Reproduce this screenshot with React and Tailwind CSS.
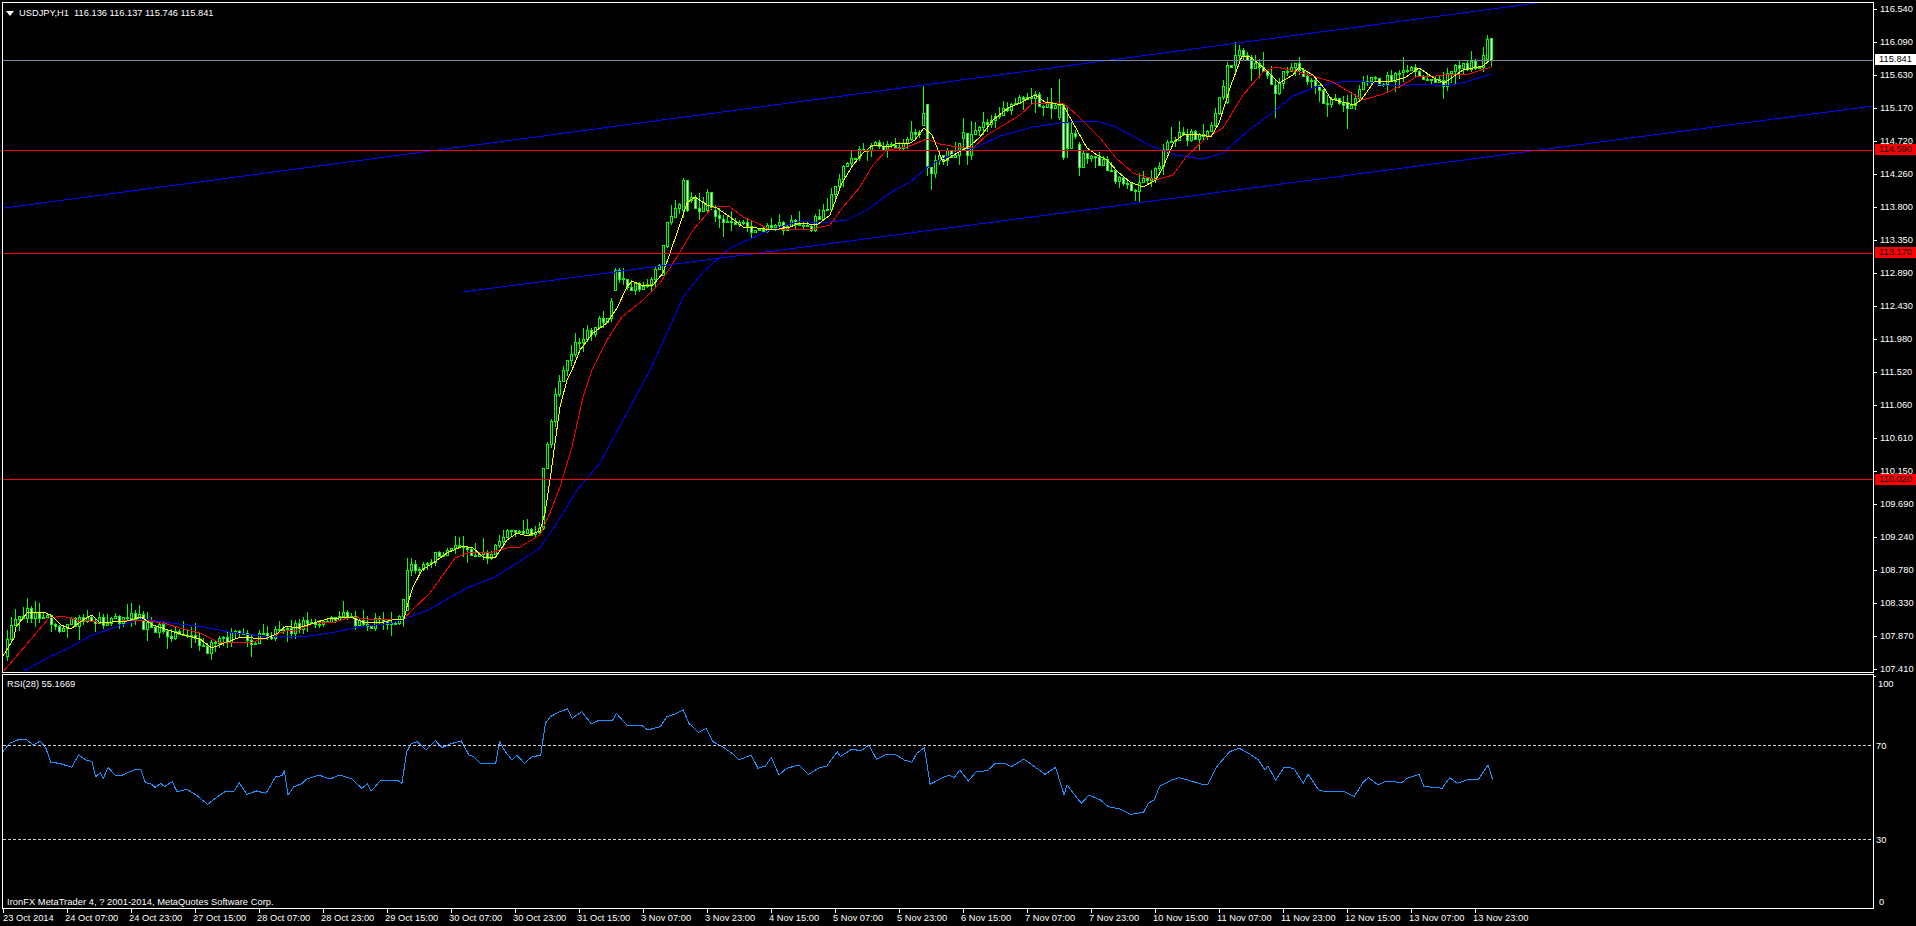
import React from "react";

const PRICE_LABELS = ["116.540","116.090","115.630","115.170","114.720","114.260","113.800","113.350","112.890","112.430","111.980","111.520","111.060","110.610","110.150","109.690","109.240","108.780","108.330","107.870","107.410"];
const TIME_LABELS = ["23 Oct 2014","24 Oct 07:00","24 Oct 23:00","27 Oct 15:00","28 Oct 07:00","28 Oct 23:00","29 Oct 15:00","30 Oct 07:00","30 Oct 23:00","31 Oct 15:00","3 Nov 07:00","3 Nov 23:00","4 Nov 15:00","5 Nov 07:00","5 Nov 23:00","6 Nov 15:00","7 Nov 07:00","7 Nov 23:00","10 Nov 15:00","11 Nov 07:00","11 Nov 23:00","12 Nov 15:00","13 Nov 07:00","13 Nov 23:00"];

// all chart points are page pixels, the svg viewBox starts at 3,3
const YELLOW = [[3,656],[14,638],[16,627],[27,613],[43,612],[51,615],[61,625],[71,629],[80,622],[92,615],[100,623],[112,622],[127,621],[141,617],[153,625],[171,631],[184,635],[200,639],[212,648],[224,643],[241,637],[265,639],[278,633],[286,626],[298,628],[314,623],[327,619],[351,617],[363,622],[380,623],[392,620],[404,619],[408,603],[413,587],[422,570],[433,563],[447,553],[463,546],[473,548],[483,557],[495,558],[507,540],[517,533],[527,536],[540,531],[545,513],[550,480],[555,443],[560,407],[567,380],[572,370],[580,350],[593,333],[607,323],[617,308],[627,287],[632,281],[643,286],[653,285],[663,273],[677,233],[687,203],[695,197],[707,205],[717,208],[730,217],[743,227],[757,228],[773,230],[790,227],[800,223],[817,225],[830,215],[842,183],[853,165],[863,153],[873,145],[890,147],[897,143],[910,143],[915,140],[924,128],[932,135],[943,162],[957,153],[970,146],[980,137],[993,120],[1008,108],[1020,103],[1035,95],[1045,102],[1063,105],[1077,130],[1087,148],[1097,155],[1107,160],[1118,172],[1130,182],[1143,187],[1156,180],[1163,167],[1174,142],[1183,135],[1196,134],[1211,137],[1219,123],[1231,85],[1242,56],[1249,56],[1264,68],[1279,83],[1293,75],[1299,67],[1313,75],[1324,88],[1331,99],[1346,103],[1354,105],[1361,100],[1374,82],[1393,81],[1406,77],[1419,68],[1434,78],[1444,83],[1463,70],[1483,66],[1491,59]];
const RED = [[3,672],[49,618],[63,616],[76,620],[90,621],[102,623],[122,621],[143,620],[167,624],[180,628],[200,633],[218,642],[253,642],[269,637],[286,631],[298,630],[314,623],[335,622],[351,617],[367,619],[404,619],[412,610],[430,593],[455,558],[470,552],[493,552],[507,548],[520,547],[540,535],[550,513],[560,487],[572,447],[583,397],[592,370],[607,340],[622,317],[643,300],[660,283],[677,257],[693,230],[712,208],[723,206],[730,207],[743,217],[757,223],[770,230],[813,229],[830,225],[843,207],[860,187],[873,165],[887,150],[907,147],[917,143],[927,139],[940,144],[957,147],[973,148],[987,135],[1007,123],[1020,115],[1033,103],[1063,103],[1077,115],[1100,138],[1116,158],[1133,173],[1156,180],[1173,175],[1186,157],[1206,138],[1223,128],[1243,95],[1263,72],[1276,67],[1299,72],[1316,77],[1333,82],[1346,90],[1363,100],[1383,94],[1403,85],[1416,77],[1436,76],[1451,74],[1469,74],[1491,67]];
const BLUE = [[22,672],[49,657],[69,648],[90,636],[122,625],[141,619],[171,623],[204,627],[229,632],[269,637],[310,636],[335,632],[359,627],[392,623],[404,619],[428,610],[467,588],[495,577],[540,548],[557,523],[577,490],[600,463],[650,370],[667,333],[683,297],[703,272],[730,248],[770,230],[800,221],[820,223],[847,220],[867,210],[890,193],[910,182],[930,165],[957,152],[977,147],[1000,136],[1033,127],[1060,123],[1080,121],[1100,122],[1116,127],[1149,145],[1176,155],[1203,159],[1223,153],[1249,130],[1276,110],[1293,96],[1313,88],[1333,83],[1349,81],[1366,82],[1383,85],[1409,85],[1423,84],[1446,86],[1466,82],[1491,74]];

// RSI read off a zoom that was 1.045x wide and 3x tall
const RSI_RAW = [[3,215],[10,190],[20,178],[28,180],[35,195],[42,183],[48,205],[53,247],[62,250],[75,262],[82,225],[90,240],[96,245],[100,290],[105,278],[108,295],[113,262],[120,285],[128,285],[140,270],[147,268],[152,308],[158,312],[162,322],[168,310],[172,320],[180,305],[185,335],[195,328],[205,345],[217,373],[225,355],[235,335],[245,333],[250,308],[258,343],[268,333],[278,340],[288,290],[295,287],[297,270],[301,345],[307,320],[315,312],[320,298],[333,285],[345,297],[355,285],[368,297],[378,325],[384,312],[388,333],[398,300],[415,300],[420,310],[425,215],[430,190],[436,185],[445,210],[455,182],[462,203],[470,192],[482,183],[490,225],[495,230],[502,250],[518,250],[522,185],[528,215],[535,240],[540,225],[548,250],[555,232],[565,225],[570,130],[575,110],[585,95],[593,87],[598,115],[608,95],[618,132],[625,122],[640,122],[644,100],[655,135],[670,135],[677,150],[690,140],[697,110],[707,100],[714,90],[720,130],[730,157],[738,145],[745,185],[755,200],[765,220],[772,240],[785,225],[792,265],[800,258],[806,232],[814,285],[822,265],[835,255],[845,283],[855,265],[864,258],[875,215],[878,230],[890,208],[900,212],[908,195],[916,238],[925,225],[935,222],[945,240],[953,247],[958,220],[966,203],[972,313],[985,293],[992,285],[997,293],[1003,270],[1012,303],[1020,275],[1032,272],[1040,250],[1050,250],[1057,260],[1070,237],[1082,262],[1092,283],[1103,262],[1112,345],[1115,315],[1130,370],[1138,345],[1150,360],[1158,380],[1170,387],[1182,403],[1195,397],[1200,370],[1206,360],[1212,318],[1225,300],[1232,293],[1245,303],[1258,315],[1262,313],[1272,258],[1285,215],[1295,205],[1305,220],[1315,240],[1322,270],[1325,258],[1333,300],[1342,262],[1352,265],[1362,310],[1367,283],[1378,330],[1385,335],[1405,335],[1415,350],[1425,305],[1430,293],[1440,315],[1448,303],[1465,308],[1470,295],[1483,283],[1488,320],[1500,322],[1507,325],[1515,293],[1523,310],[1535,298],[1545,298],[1555,255],[1560,300]];
const RSI = RSI_RAW.map(([x, y]) => [x / 1.045, 680 + y / 3]);

// candles that were read one by one: x -> [open, close, high, low]
const FIXED = {
  407: [610, 570, 558, 610], 411: [570, 564, 558, 576], 535: [534, 532, 526, 537], 539: [532, 528, 522, 534],
  543: [528, 468, 468, 530], 548: [468, 418, 410, 470], 552: [418, 400, 396, 430], 556: [400, 394, 390, 402],
  560: [395, 373, 372, 398], 615: [290, 270, 268, 290], 619: [270, 279, 268, 283], 623: [279, 278, 268, 285],
  627: [279, 287, 279, 290], 663: [275, 245, 245, 276], 667: [246, 222, 222, 248], 671: [222, 216, 205, 225],
  675: [217, 208, 200, 218], 683: [210, 180, 178, 218], 687: [180, 210, 180, 212], 691: [200, 197, 192, 203],
  695: [198, 208, 195, 209], 699: [208, 211, 193, 220], 707: [210, 192, 189, 212], 711: [192, 207, 192, 210],
  715: [210, 216, 205, 222], 719: [215, 218, 208, 228], 723: [219, 222, 215, 237], 923: [125, 113, 85, 125],
  927: [104, 167, 104, 176], 931: [167, 173, 167, 190], 935: [173, 160, 155, 178], 963: [138, 132, 118, 150],
  967: [133, 155, 133, 165], 1059: [117, 105, 79, 120], 1063: [105, 157, 103, 160], 1067: [123, 148, 108, 158],
  1079: [144, 167, 142, 176], 1227: [102, 65, 62, 104], 1235: [65, 55, 42, 75], 1239: [55, 50, 45, 62],
  1243: [50, 55, 48, 60], 1251: [57, 68, 55, 81], 1275: [85, 93, 80, 118], 1288: [65, 62, 48, 75],
  1347: [102, 108, 95, 129], 1403: [72, 70, 57, 82], 1443: [80, 86, 72, 99], 1487: [59, 39, 35, 60], 1491: [38, 60, 38, 67],
};

function interp(points, x) {
  if (x <= points[0][0]) return points[0][1];
  for (let i = 1; i < points.length; i++) {
    if (x <= points[i][0]) {
      const [x0, y0] = points[i - 1];
      const [x1, y1] = points[i];
      return y0 + ((y1 - y0) * (x - x0)) / (x1 - x0);
    }
  }
  return points[points.length - 1][1];
}

function buildBars() {
  let seed = 20141113;
  const rnd = () => {
    seed = (seed + 0x6d2b79f5) | 0;
    let t = Math.imul(seed ^ (seed >>> 15), 1 | seed);
    t = (t + Math.imul(t ^ (t >>> 7), 61 | t)) ^ t;
    return ((t ^ (t >>> 14)) >>> 0) / 4294967296;
  };
  const bars = [];
  let prev = 656;
  for (let x = 7; x <= 1491; x += 4) {
    const close = Math.round(interp(YELLOW, x + 7) + (rnd() - 0.5) * 12);
    const open = prev;
    const high = Math.min(open, close) - Math.round(rnd() * rnd() * 16);
    const low = Math.max(open, close) + Math.round(rnd() * rnd() * 16);
    const fixed = FIXED[x];
    if (fixed) {
      bars.push({ x, o: fixed[0], c: fixed[1], h: fixed[2], l: fixed[3] });
      prev = fixed[1];
    } else {
      bars.push({ x, o: open, c: close, h: high, l: low });
      prev = close;
    }
  }
  return bars;
}

const BARS = buildBars();
const toPoints = (pts) => pts.map((p) => p.join(",")).join(" ");

function PriceChart() {
  return (
    <svg width="1870" height="668" viewBox="3 3 1870 668" shapeRendering="crispEdges" className="block">
      {BARS.map((b) => (
        <g key={b.x}>
          <line x1={b.x + 0.5} x2={b.x + 0.5} y1={b.h} y2={b.l} stroke="#00ff00" />
          <rect
            x={b.x - 0.5}
            y={Math.min(b.o, b.c) + 0.5}
            width="2"
            height={Math.max(Math.abs(b.o - b.c), 1)}
            fill={b.c > b.o ? "#ffffff" : "#000000"}
            stroke="#00ff00"
          />
        </g>
      ))}
      <polyline points={toPoints(BLUE)} fill="none" stroke="#0000ff" />
      <polyline points={toPoints(RED)} fill="none" stroke="#ff0000" />
      <polyline points={toPoints(YELLOW)} fill="none" stroke="#ffff00" />
      <line x1="3" y1="208.2" x2="1537" y2="3" stroke="#0000ff" />
      <line x1="463" y1="292" x2="1873" y2="106" stroke="#0000ff" />
      <line x1="3" x2="1873" y1="60.5" y2="60.5" stroke="#778899" />
      <line x1="3" x2="1873" y1="150.5" y2="150.5" stroke="#ff0000" />
      <line x1="3" x2="1873" y1="253.5" y2="253.5" stroke="#ff0000" />
      <line x1="3" x2="1873" y1="479.5" y2="479.5" stroke="#ff0000" />
    </svg>
  );
}

function RsiChart() {
  return (
    <svg width="1870" height="233" viewBox="3 675 1870 233" shapeRendering="crispEdges" className="block">
      <polyline points={toPoints(RSI)} fill="none" stroke="#1e90ff" />
      <line x1="3" x2="1873" y1="745.5" y2="745.5" stroke="#d0d0d0" strokeDasharray="3 2" />
      <line x1="3" x2="1873" y1="839.5" y2="839.5" stroke="#d0d0d0" strokeDasharray="3 2" />
    </svg>
  );
}

export default function App() {
  return (
    <div className="flex h-[926px] w-[1916px] flex-col overflow-hidden bg-black pl-[2px] pt-[2px] font-['Liberation_Sans',Arial,sans-serif] text-[9.3px] text-white">
      {/* price window */}
      <div className="flex h-[671px]">
        <div className="relative h-full w-[1872px] border border-white">
          <PriceChart />
          <div className="absolute left-[3px] top-[5px] flex items-center gap-[5px]">
            <svg width="8" height="5" viewBox="0 0 8 5">
              <polygon points="0,0 8,0 4,5" fill="#ffffff" />
            </svg>
            <span className="whitespace-pre leading-[10px]">USDJPY,H1  116.136 116.137 115.746 115.841</span>
          </div>
        </div>
        <div className="relative flex-1">
          <div className="flex flex-col gap-[19px]">
            {PRICE_LABELS.map((label) => (
              <div key={label} className="flex h-[14px] items-center">
                <div className="h-px w-[3px] bg-white" />
                <span className="ml-[3px] leading-[14px]">{label}</span>
              </div>
            ))}
          </div>
          <div className="absolute left-[1px] top-[52px] h-[11px] w-[41px] bg-white pl-[4px] leading-[11px] text-black">115.841</div>
          <div className="absolute left-[1px] top-[142px] h-[11px] w-[41px] bg-[#ff0000] pl-[4px] leading-[11px] text-black">114.590</div>
          <div className="absolute left-[1px] top-[245px] h-[11px] w-[41px] bg-[#ff0000] pl-[4px] leading-[11px] text-black">113.170</div>
          <div className="absolute left-[1px] top-[472px] h-[11px] w-[41px] bg-[#ff0000] pl-[4px] leading-[11px] text-black">110.020</div>
        </div>
      </div>

      {/* RSI window */}
      <div className="mt-px flex h-[235px]">
        <div className="relative h-full w-[1872px] border border-white">
          <RsiChart />
          <span className="absolute left-[4px] top-[4px] leading-[10px]">RSI(28) 55.1669</span>
          <span className="absolute left-[4px] top-[222px] leading-[10px] tracking-[0.05px]">IronFX MetaTrader 4, ? 2001-2014, MetaQuotes Software Corp.</span>
        </div>
        <div className="flex flex-1 flex-col leading-[14px]">
          <div className="mt-[2px] h-px w-[2px] bg-white" />
          <span className="ml-[4px]">100</span>
          <span className="ml-[2px] mt-[48px]">70</span>
          <span className="ml-[2px] mt-[80px]">30</span>
          <span className="ml-[5px] mt-[48px]">0</span>
        </div>
      </div>

      {/* time axis */}
      <div className="flex pl-px">
        {TIME_LABELS.map((label, i) => (
          <div key={label} className="w-[64px] shrink-0">
            <div className="h-[4px] w-px bg-white" />
            <div className={`whitespace-nowrap leading-[10px] ${i === 0 ? "ml-0" : "-ml-[2px]"}`}>{label}</div>
          </div>
        ))}
      </div>
    </div>
  );
}
